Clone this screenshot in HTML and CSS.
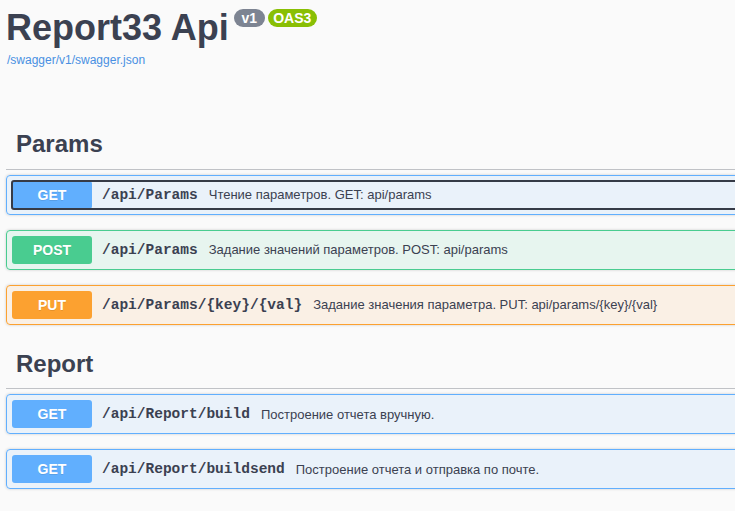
FILE: index.html
```html
<!DOCTYPE html>
<html lang="ru">
<head>
<meta charset="utf-8">
<title>Report33 Api</title>
<link rel="stylesheet" href="styles.css">
</head>
<body>
<div class="page">
  <div class="info">
    <div class="title-row">
      <h2 class="title">Report33 Api</h2>
      <span class="stamp stamp-version">v1</span>
      <span class="stamp stamp-oas">OAS3</span>
    </div>
    <a class="base-url" href="#">/swagger/v1/swagger.json</a>
  </div>

  <section class="tag-section">
    <h3 class="tag">Params</h3>
    <div class="opblock opblock-get">
      <div class="summary">
        <div class="control focused">
          <span class="method">GET</span>
          <span class="path">/api/Params</span>
          <span class="desc">Чтение параметров. GET: api/params</span>
        </div>
      </div>
    </div>
    <div class="opblock opblock-post">
      <div class="summary">
        <div class="control">
          <span class="method">POST</span>
          <span class="path">/api/Params</span>
          <span class="desc">Задание значений параметров. POST: api/params</span>
        </div>
      </div>
    </div>
    <div class="opblock opblock-put">
      <div class="summary">
        <div class="control">
          <span class="method">PUT</span>
          <span class="path">/api/Params/{key}/{val}</span>
          <span class="desc">Задание значения параметра. PUT: api/params/{key}/{val}</span>
        </div>
      </div>
    </div>
  </section>

  <section class="tag-section">
    <h3 class="tag">Report</h3>
    <div class="opblock opblock-get">
      <div class="summary">
        <div class="control">
          <span class="method">GET</span>
          <span class="path">/api/Report/build</span>
          <span class="desc">Построение отчета вручную.</span>
        </div>
      </div>
    </div>
    <div class="opblock opblock-get">
      <div class="summary">
        <div class="control">
          <span class="method">GET</span>
          <span class="path">/api/Report/buildsend</span>
          <span class="desc">Построение отчета и отправка по почте.</span>
        </div>
      </div>
    </div>
  </section>
</div>
</body>
</html>
```

FILE: styles.css
```css
html, body {
  margin: 0;
  padding: 0;
  overflow: hidden;
  background: #fafafa;
}

body {
  font-family: "Liberation Sans", Arial, sans-serif;
  color: #3b4151;
}

.page {
  width: 820px;
  padding: 7px 0 0 6px;
  box-sizing: border-box;
}

.title-row {
  display: flex;
  align-items: flex-start;
}

.title {
  margin: 0;
  font-size: 36px;
  font-weight: 700;
  line-height: 41px;
  color: #3b4151;
}

.stamp {
  display: inline-block;
  height: 18px;
  line-height: 18px;
  margin-top: 2px;
  border-radius: 57px;
  color: #fff;
  font-size: 14px;
  font-weight: 700;
  text-align: center;
}

.stamp-version {
  width: 31px;
  margin-left: 5px;
  background: #7d8492;
}

.stamp-oas {
  width: 49px;
  margin-left: 3px;
  background: #89bf04;
}

.base-url {
  display: block;
  margin-top: 5px;
  padding-left: 1px;
  font-size: 12px;
  line-height: 14px;
  color: #4990e2;
  text-decoration: none;
}

.info + .tag-section {
  margin-top: 53px;
}

.tag {
  margin: 0 0 5px;
  padding: 10px 20px 10px 10px;
  font-size: 24px;
  font-weight: 700;
  line-height: 28.5px;
  color: #3b4151;
  border-bottom: 1px solid rgba(59, 65, 81, 0.3);
}

.opblock {
  margin: 0 0 15px;
  border: 1px solid #000;
  border-radius: 4px;
  box-shadow: 0 0 3px rgba(0, 0, 0, 0.19);
}

.summary {
  display: flex;
  align-items: center;
  padding: 5px;
}

.control {
  display: flex;
  align-items: center;
  flex: 1;
}

.control.focused {
  outline: 2px solid #363b47;
  outline-offset: -1px;
  border-radius: 2px;
}

.method {
  min-width: 80px;
  padding: 6px 0;
  border-radius: 3px;
  color: #fff;
  font-size: 14px;
  font-weight: 700;
  line-height: 16px;
  text-align: center;
  text-shadow: 0 1px 0 rgba(0, 0, 0, 0.1);
}

.path {
  padding: 0 10px;
  font-family: "Liberation Mono", "DejaVu Sans Mono", monospace;
  font-size: 14.5px;
  font-weight: 700;
  color: #3b4151;
}

.desc {
  padding-left: 1px;
  font-size: 13px;
  color: #3b4151;
}

.opblock-get {
  border-color: #61affe;
  background: rgba(97, 175, 254, 0.1);
}
.opblock-get .method {
  background: #61affe;
}

.opblock-post {
  border-color: #49cc90;
  background: rgba(73, 204, 144, 0.1);
}
.opblock-post .method {
  background: #49cc90;
}

.opblock-put {
  border-color: #fca130;
  background: rgba(252, 161, 48, 0.1);
}
.opblock-put .method {
  background: #fca130;
}
```
